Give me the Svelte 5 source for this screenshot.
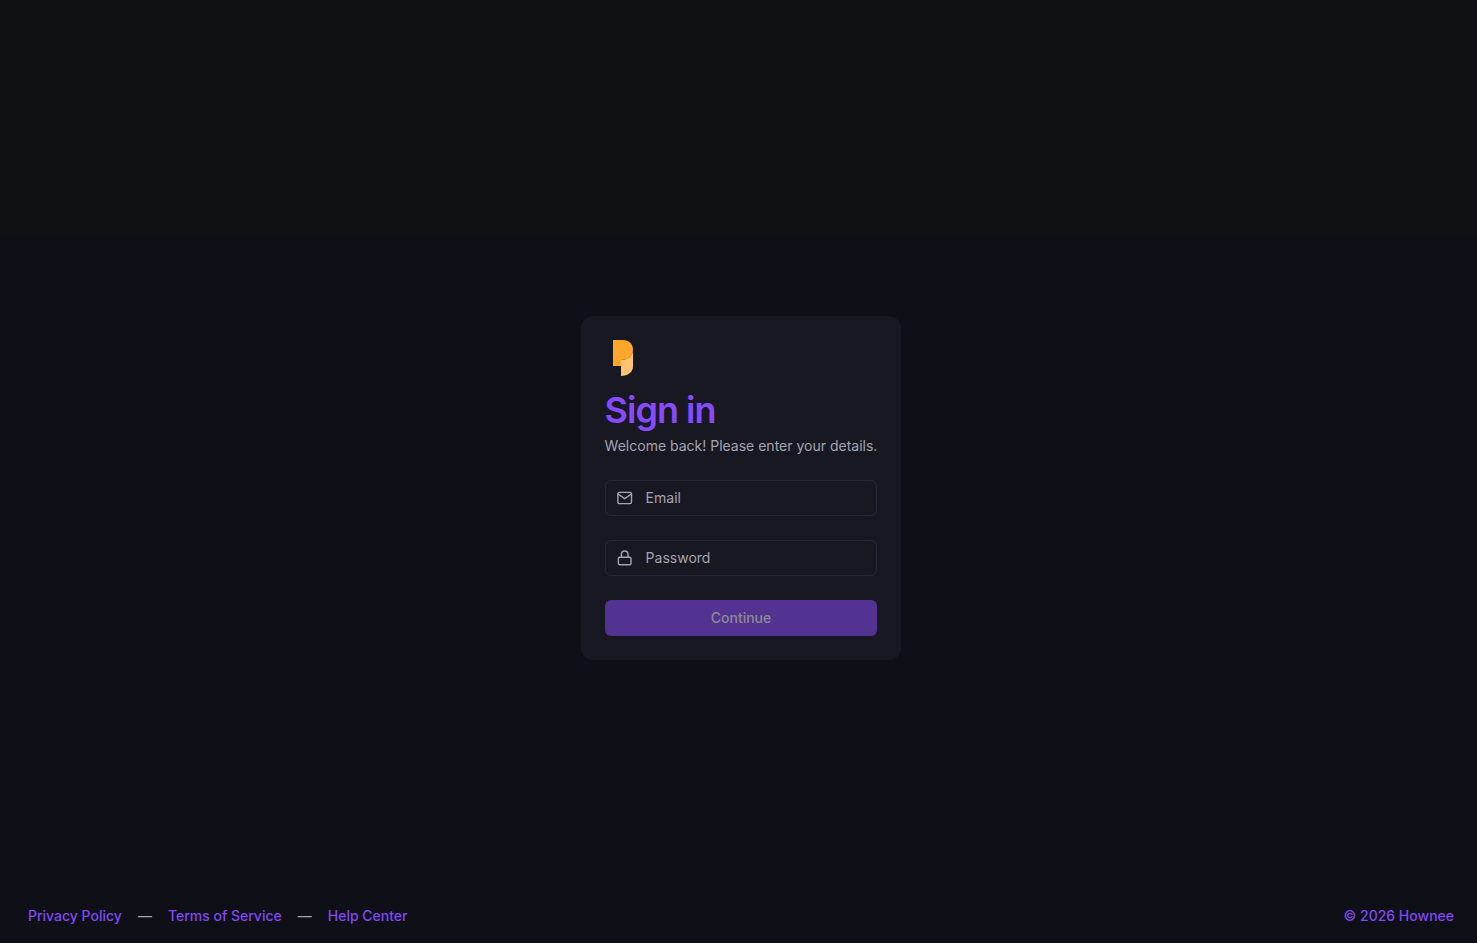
<script>
  let email = $state('');
  let password = $state('');
</script>

<div class="page">
  <main>
    <form class="card" onsubmit={(event) => event.preventDefault()}>
      <svg class="logo" viewBox="0 0 36 36" aria-hidden="true">
        <path d="M16 20C23 20 28 16 28 9v17.500C28 32 23 36 16 36Z" fill="#ffc372" />
        <path d="M8 0h10c6 0 10 4 10 9.500C28 16 23 20 16 20v6H8Z" fill="#ffa62b" />
      </svg>
      <h1>Sign in</h1>
      <p>Welcome back! Please enter your details.</p>
      <div class="fields">
        <label class="field">
          <svg viewBox="0 0 16 16" aria-hidden="true">
            <rect x="0.900" y="2.400" width="13.600" height="11.200" rx="1.300" />
            <path d="m1.400 4.200 6.300 4.400 6.300-4.400" />
          </svg>
          <input type="email" placeholder="Email" aria-label="Email" bind:value={email} />
        </label>
        <label class="field">
          <svg viewBox="0 0 16 16" aria-hidden="true">
            <rect x="1.400" y="7.300" width="12.600" height="7.400" rx="1.300" />
            <path d="M4.400 7.200V4.300a3.300 3.300 0 0 1 6.600 0v2.900" />
          </svg>
          <input type="password" placeholder="Password" aria-label="Password" bind:value={password} />
        </label>
        <button type="submit" disabled={!email || !password}>Continue</button>
      </div>
    </form>
  </main>
  <footer>
    <nav>
      <a href="#privacy">Privacy Policy</a>
      <span>—</span>
      <a href="#terms">Terms of Service</a>
      <span>—</span>
      <a href="#help">Help Center</a>
    </nav>
    <a href="#home">© 2026 Hownee</a>
  </footer>
</div>

<style>
  :global(body) {
    margin: 0;
    background: #0f0f18;
  }
  .page {
    box-sizing: border-box;
    min-height: 100vh;
    display: flex;
    flex-direction: column;
    padding: 72px 23px 15px 28px;
    background: linear-gradient(#101115 25%, #0f0f18 25%);
    font: 14px/24px Inter, sans-serif;
    color: #a5a4b0;
  }
  main {
    flex: 1;
    display: flex;
    align-items: center;
    justify-content: center;
  }
  .card {
    padding: 24px;
    border-radius: 12px;
    background: #181823;
  }
  .logo {
    display: block;
    width: 36px;
    height: 36px;
  }
  h1 {
    margin: 12px 0 0;
    font-size: 36px;
    line-height: 44px;
    font-weight: 600;
    letter-spacing: -1px;
    color: #864bff;
  }
  p {
    margin: 2px 0 22px;
  }
  .fields {
    display: grid;
    gap: 24px;
  }
  .field {
    box-sizing: border-box;
    height: 36px;
    display: flex;
    align-items: center;
    gap: 13px;
    padding: 0 11px;
    border: 1px solid #29283a;
    border-radius: 6px;
  }
  .field svg {
    flex: none;
    width: 16px;
    height: 16px;
    fill: none;
    stroke: #a5a4b0;
    stroke-width: 1.4;
    stroke-linejoin: round;
    stroke-linecap: round;
  }
  input {
    flex: 1;
    min-width: 0;
    width: 0;
    padding: 0;
    border: 0;
    outline: 0;
    background: none;
    font: inherit;
    color: #e4e3ea;
  }
  input::placeholder {
    color: #a5a4b0;
    opacity: 1;
  }
  button {
    height: 36px;
    padding: 0;
    border: 0;
    border-radius: 6px;
    background: #864bff;
    font: inherit;
    font-weight: 500;
    color: #fff;
  }
  button:disabled {
    background: #523391;
    color: #8d8a93;
  }
  footer {
    display: flex;
    justify-content: space-between;
  }
  nav {
    display: flex;
    gap: 16px;
  }
  a {
    color: #8049f3;
    font-weight: 500;
    text-decoration: none;
  }
</style>
